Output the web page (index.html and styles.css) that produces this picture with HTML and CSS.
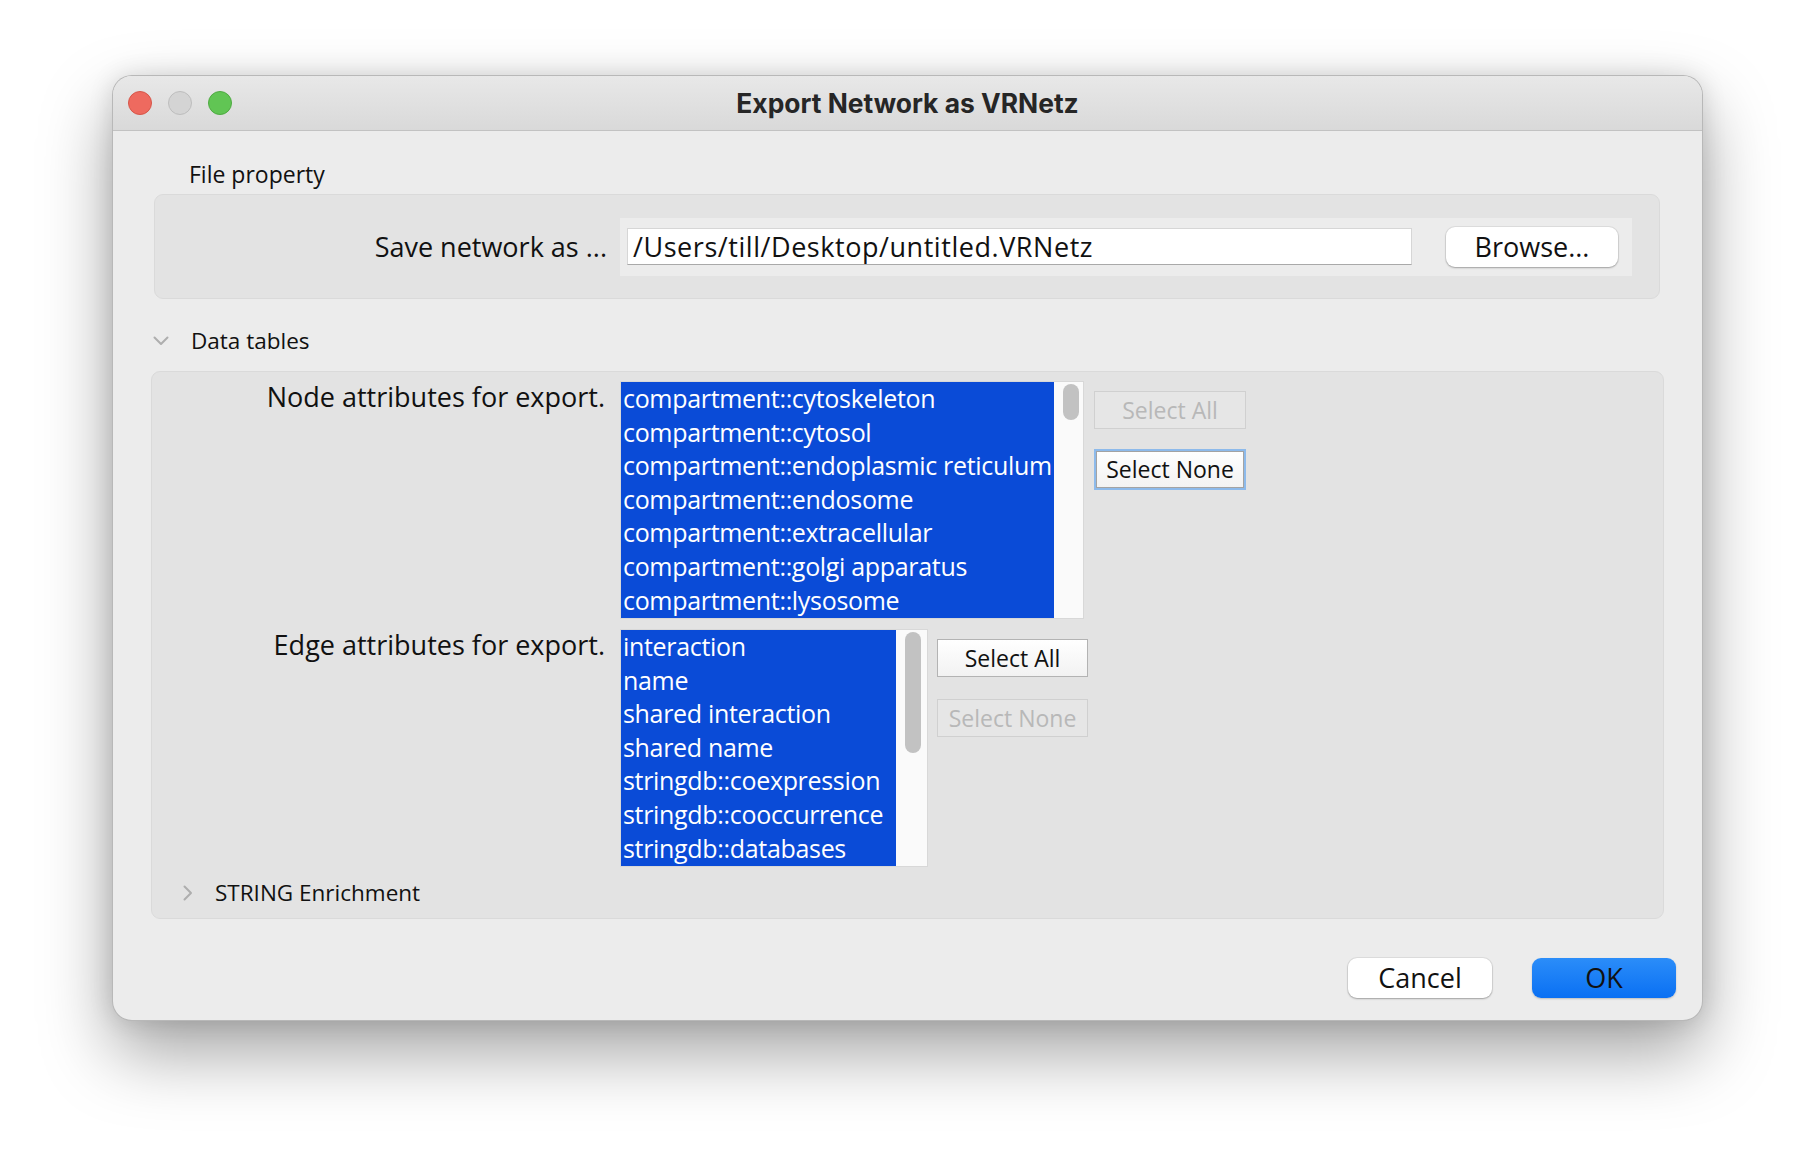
FILE: index.html
```html
<!DOCTYPE html>
<html>
<head>
<meta charset="utf-8">
<link rel="stylesheet" href="styles.css">
</head>
<body>
<div class="window">
  <div class="titlebar">
    <div class="lights">
      <span class="light red"></span>
      <span class="light grey"></span>
      <span class="light green"></span>
    </div>
    <div class="title">Export Network as VRNetz</div>
  </div>
  <div class="content">
    <div class="file-title">File property</div>
    <div class="panel file-panel">
      <div class="label file-label">Save network as ...</div>
      <div class="file-row">
        <div class="textfield">/Users/till/Desktop/untitled.VRNetz</div>
        <button class="mac-btn browse">Browse...</button>
      </div>
    </div>
    <div class="collapse-head data-head">
      <svg class="chev-down" width="16" height="10" viewBox="0 0 16 10"><path d="M1.5 1.5 L8 8 L14.5 1.5" fill="none" stroke="#aeaeae" stroke-width="2" stroke-linecap="round" stroke-linejoin="round"/></svg>
      <span class="head-text">Data tables</span>
    </div>
    <div class="panel data-panel">
      <div class="attr-row">
        <div class="label attr-label">Node attributes for export.</div>
        <div class="list node-list">
          <ul class="items">
            <li>compartment::cytoskeleton</li>
            <li>compartment::cytosol</li>
            <li>compartment::endoplasmic reticulum</li>
            <li>compartment::endosome</li>
            <li>compartment::extracellular</li>
            <li>compartment::golgi apparatus</li>
            <li>compartment::lysosome</li>
          </ul>
          <div class="scroll"><div class="thumb node-thumb"></div></div>
        </div>
        <div class="btn-col node-btns">
          <button class="sel-btn disabled">Select All</button>
          <button class="sel-btn focused">Select None</button>
        </div>
      </div>
      <div class="attr-row edge-row">
        <div class="label attr-label">Edge attributes for export.</div>
        <div class="list edge-list">
          <ul class="items">
            <li>interaction</li>
            <li>name</li>
            <li>shared interaction</li>
            <li>shared name</li>
            <li>stringdb::coexpression</li>
            <li>stringdb::cooccurrence</li>
            <li>stringdb::databases</li>
          </ul>
          <div class="scroll edge-scroll"><div class="thumb edge-thumb"></div></div>
        </div>
        <div class="btn-col edge-btns">
          <button class="sel-btn">Select All</button>
          <button class="sel-btn disabled">Select None</button>
        </div>
      </div>
      <div class="collapse-head string-head">
        <svg class="chev-right" width="10" height="16" viewBox="0 0 10 16"><path d="M1.5 1.5 L8 8 L1.5 14.5" fill="none" stroke="#aeaeae" stroke-width="2" stroke-linecap="round" stroke-linejoin="round"/></svg>
        <span class="head-text">STRING Enrichment</span>
      </div>
    </div>
    <div class="footer">
      <button class="mac-btn cancel">Cancel</button>
      <button class="mac-btn ok">OK</button>
    </div>
  </div>
</div>
</body>
</html>
```

FILE: styles.css
```css
* { box-sizing: border-box; }
html, body { margin: 0; padding: 0; }
body {
  width: 1814px;
  height: 1168px;
  background: #ffffff;
  font-family: "Open Sans", "Noto Sans", sans-serif;
  color: #111;
  overflow: hidden;
}
button { font-family: inherit; color: inherit; padding: 0; }

.window {
  margin: 75px 0 0 112px;
  width: 1591px;
  height: 946px;
  background: #ececec;
  border: 1px solid rgba(0, 0, 0, 0.22);
  border-radius: 20px;
  overflow: hidden;
  box-shadow: 0 32px 70px rgba(0, 0, 0, 0.36), 0 0 24px rgba(0, 0, 0, 0.12);
}

.titlebar {
  height: 55px;
  display: grid;
  align-items: center;
  background: linear-gradient(#e8e8e8, #d9d9d9);
  border-bottom: 1px solid #c2c2c2;
}
.lights, .title { grid-area: 1 / 1; }
.lights {
  justify-self: start;
  display: flex;
  gap: 16px;
  padding-left: 15px;
}
.light {
  width: 24px;
  height: 24px;
  border-radius: 50%;
  display: block;
}
.red { background: #ee6a5f; border: 1px solid #d65649; }
.grey { background: #d4d4d4; border: 1px solid #bdbdbd; }
.green { background: #61c554; border: 1px solid #4faa42; }
.title {
  justify-self: center;
  font-family: "Inter", "Open Sans", sans-serif;
  font-weight: 700;
  font-size: 26.4px;
  color: #262626;
}

.content {
  padding: 0 38px;
}

.file-title {
  margin: 28px 0 5px 38px;
  font-size: 23px;
  line-height: 30px;
}

.panel {
  background: #e3e3e3;
  border: 1px solid #dadada;
  border-radius: 9px;
}

.file-panel {
  margin: 0 4px 0 3px;
  height: 105px;
  display: flex;
  align-items: center;
}
.label {
  font-size: 27px;
  text-align: right;
  white-space: nowrap;
}
.file-label {
  width: 452px;
  margin-right: 13px;
}
.file-row {
  width: 1012px;
  height: 58px;
  background: #ececec;
  display: flex;
  align-items: center;
  gap: 34px;
  padding: 0 14px 0 7px;
}
.textfield {
  width: 785px;
  height: 37px;
  background: #ffffff;
  border: 1px solid #d6d6d6;
  border-bottom-color: #a9a9a9;
  font-size: 27px;
  letter-spacing: 0.55px;
  line-height: 35px;
  padding-left: 5px;
  white-space: nowrap;
}

.mac-btn {
  height: 40px;
  border: none;
  border-radius: 9px;
  background: #ffffff;
  font-size: 27px;
  line-height: 40px;
  box-shadow: 0 1px 2px rgba(0, 0, 0, 0.28), 0 0 0 1px rgba(0, 0, 0, 0.06);
}
.browse { width: 172px; }

.collapse-head {
  height: 30px;
  display: flex;
  align-items: center;
}
.head-text {
  font-size: 22.5px;
  line-height: 30px;
}
.data-head {
  margin: 27px 0 15px 2px;
}
.chev-down { margin-right: 22px; }

.data-panel {
  height: 548px;
  padding-top: 9px;
}
.attr-row {
  display: flex;
  align-items: flex-start;
}
.edge-row { margin-top: 10px; }
.attr-label {
  width: 453px;
  margin-right: 15px;
  line-height: 34px;
  margin-top: -1px;
}

.list {
  height: 238px;
  border: 1px solid #d8d8d8;
  display: flex;
  background: #fafafa;
}
.node-list { width: 464px; }
.edge-list { width: 308px; }
.items {
  list-style: none;
  margin: 0;
  padding: 0;
  flex: 1;
  background: #0a4bd7;
  overflow: hidden;
}
.items li {
  color: #ffffff;
  font-size: 25px;
  letter-spacing: -0.32px;
  line-height: 33.6px;
  padding-left: 2px;
  white-space: nowrap;
}
.scroll {
  width: 29px;
  background: #fafafa;
  padding: 2px 0 0 9px;
}
.edge-scroll { width: 31px; padding-left: 9px; }
.thumb {
  width: 16px;
  background: #c2c2c2;
  border-radius: 8px;
}
.node-thumb { height: 36px; }
.edge-thumb { height: 121px; }

.btn-col {
  display: flex;
  flex-direction: column;
  gap: 20px;
  padding-top: 10px;
}
.node-btns { margin-left: 10px; }
.edge-btns { margin-left: 9px; gap: 22px; }
.edge-btns .sel-btn { width: 151px; }

.sel-btn {
  width: 152px;
  height: 38px;
  font-size: 23px;
  line-height: 36px;
  border: 1px solid #b3b3b3;
  background: linear-gradient(#ffffff, #f2f2f2);
  border-radius: 0;
}
.sel-btn.disabled {
  background: #e6e6e6;
  border-color: #d0d0d0;
  color: #b8b8b8;
}
.sel-btn.focused {
  height: 41px;
  border: 2px solid #8dbaeb;
  box-shadow: inset 0 0 0 1px #a3a3a3;
  line-height: 37px;
}

.string-head {
  margin: 11px 0 0 31px;
}
.chev-right { margin-right: 22px; }

.footer {
  margin: 39px -12px 0 0;
  display: flex;
  justify-content: flex-end;
  gap: 40px;
}
.cancel, .ok { width: 144px; }
.ok {
  background: linear-gradient(#2b8df9, #0a70f3);
  box-shadow: 0 1px 2px rgba(0, 0, 0, 0.2);
}
```
